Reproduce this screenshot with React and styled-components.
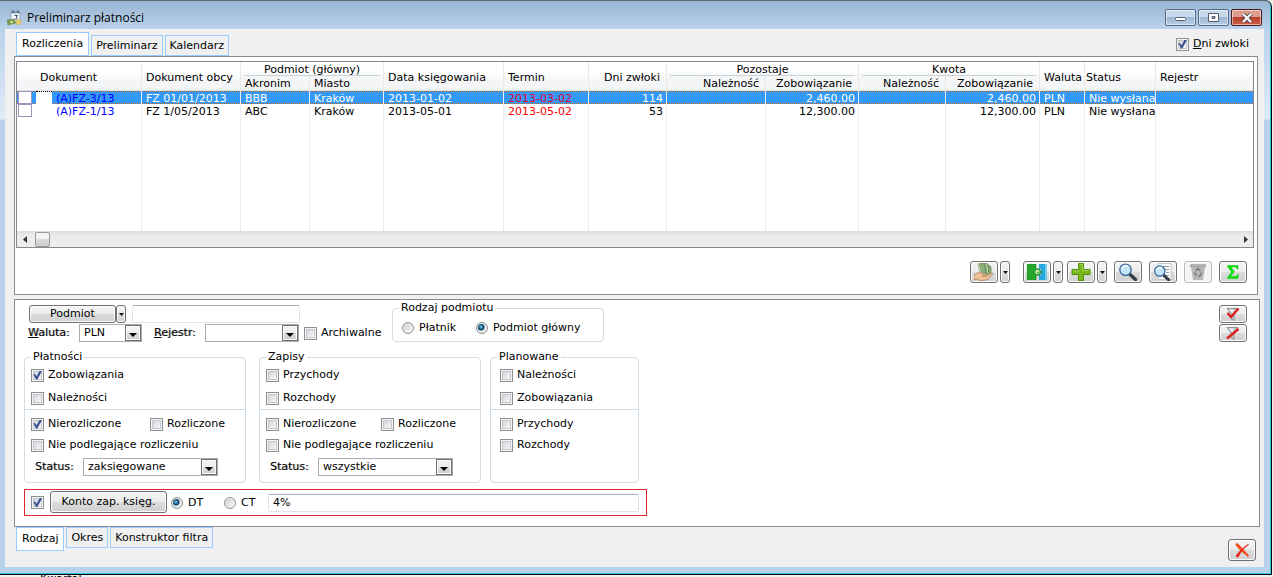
import * as React from "react"
import styled, { createGlobalStyle, css } from "styled-components"

const GlobalStyle = createGlobalStyle`
  *, *::before, *::after {
    box-sizing: border-box;
  }

  body {
    margin: 0;
    background: #f0f0f0;
    color: #000;
    font: 11px/14px "DejaVu Sans", Verdana, sans-serif;
  }

  button, input, select {
    margin: 0;
    font: inherit;
    color: inherit;
  }
`

const Page = styled.div`
  display: flex;
  flex-direction: column;
  min-height: 100vh;
`

const Frame = styled.main`
  flex: 1;
  display: flex;
  flex-direction: column;
  margin-right: 1px;
  padding: 0 7px 7px 5px;
  border: solid #000;
  border-width: 0 1px 1px 0;
  border-top-right-radius: 7px;
  background: linear-gradient(
    #98b4d2 0,
    #b9d1ea 28px,
    #dfebf8 119px,
    #b9d1ea 120px
  );
  box-shadow: inset -1px -1px 0 #35c3de, inset 0 1px 0 #5b6672;
`

const Backdrop = styled.footer`
  display: flex;
  align-items: flex-start;
  height: 2px;
  padding-left: 40px;
  overflow: hidden;
  line-height: 8px;
`

const TitleBar = styled.header`
  display: flex;
  align-items: center;
  gap: 2px;
  height: 29px;
  padding: 6px 2px 0 2px;
`

const Title = styled.h1`
  flex: 1;
  margin: 0 0 0 2px;
  font: 12px/16px "Open Sans", "Noto Sans", sans-serif;
`

const WindowButton = styled.button`
  display: grid;
  place-items: center;
  width: 31px;
  height: 17px;
  padding: 0;
  border: 1px solid ${p => (p.$danger ? "#4c1a20" : "#566b85")};
  border-radius: 2px;
  box-shadow: inset 0 0 0 1px rgba(255, 255, 255, 0.5);
  background: ${p =>
    p.$danger
      ? "linear-gradient(#dc9c8e 0 45%, #b8402c 50%, #c9604a)"
      : "linear-gradient(#c6d8ea 0 45%, #9db7d3 50%, #b8cee4)"};
`

const Client = styled.div`
  flex: 1;
  display: flex;
  flex-direction: column;
  background: #f0f0f0;
`

const TopBar = styled.div`
  display: flex;
  align-items: center;
  justify-content: space-between;
  height: 27px;
  padding: 3px 15px 0 11px;
`

const BottomBar = styled.div`
  flex: 1;
  display: flex;
  justify-content: space-between;
  padding: 0 8px 0 11px;
`

const Tabs = styled.nav`
  display: flex;
  gap: 2px;
  align-items: ${p => (p.$below ? "flex-start" : "flex-end")};
  height: 24px;
`

const Tab = styled.button`
  height: ${p => (p.$active ? 24 : 21)}px;
  padding: 0 ${p => (p.$active ? 5 : 4)}px;
  border: 1px solid #99ccff;
  background: ${p => (p.$active ? "#fff" : "#f0f0f0")};
  white-space: nowrap;
`

const Panel = styled.section`
  margin: 0 ${p => p.$right}px 0 9px;
  border: 1px solid #8a8a94;
  background: #fff;

  & + & {
    margin-top: 4px;
  }
`

const TableBox = styled.div`
  margin: 4px 3px 0 1px;
  border: 1px solid #828790;
  overflow: hidden;
`

const Table = styled.table`
  width: 100%;
  border-collapse: separate;
  border-spacing: 0;
  table-layout: fixed;
  line-height: 13px;
`

const Th = styled.th`
  height: 14px;
  padding: ${p => (p.$tall ? "3px" : "1px")} ${p => (p.$right ? 6 : 0)}px 0
    ${p => p.$indent ?? 4}px;
  border-right: 1px solid #e6e8ea;
  border-bottom: 1px solid #dcdfe1;
  background: ${p =>
    p.$tall
      ? "linear-gradient(#fff 10px, #f5f6f7 18px, #f3f4f6)"
      : "linear-gradient(#f5f6f7, #f3f4f6)"};
  font-weight: normal;
  text-align: ${p => (p.$right ? "right" : "left")};
  white-space: nowrap;

  &:last-child {
    border-right: ${p => (p.$tall ? "0" : "")};
  }
`

const GroupTh = styled.th`
  height: 14px;
  padding: 0 3px;
  border-right: 1px solid #e6e8ea;
  background: linear-gradient(#fff 8px, #f5f6f7);
  font-weight: normal;

  span {
    display: block;
    height: 14px;
    border-bottom: 1px solid #ccd3d8;
    line-height: 15px;
  }
`

const Td = styled.td`
  height: 13px;
  padding: 2px ${p => (p.$right ? 3 : 0)}px 0 4px;
  border-right: 1px solid #ececec;
  color: ${p => p.$color};
  line-height: 11px;
  text-align: ${p => (p.$right ? "right" : "left")};
  white-space: nowrap;
  overflow: hidden;

  &:last-child {
    border-right: 0;
  }
`

const DocTd = styled(Td)`
  padding: 0 0 0 1px;
  line-height: 15px;
`

const Tr = styled.tr`
  ${p =>
    p.$selected &&
    css`
      color: #fff;

      td {
        background:
          repeating-linear-gradient(90deg, #c8691e 0 1px, #3399ff 1px 2px) top /
            100% 1px no-repeat,
          repeating-linear-gradient(90deg, #c8691e 0 1px, #3399ff 1px 2px)
            bottom / 100% 1px no-repeat,
          #3399ff;
      }
    `}
`

const FillRow = styled.tr`
  td {
    height: 114px;
  }
`

const DocCell = styled.span`
  display: flex;
  height: 13px;
`

const RowCheck = styled.input`
  appearance: none;
  flex: none;
  width: 14px;
  height: 13px;
  border: 1px solid #9a94bd;
  background: #fff;
`

const RowMarker = styled.span`
  flex: none;
  width: 16px;
  height: 13px;
  margin: 0 4px 0 4px;
  border-top: ${p => (p.$selected ? "1px dotted #000" : "0")};
  background: #fff;
`

const ScrollBar = styled.div`
  display: flex;
  align-items: center;
  justify-content: space-between;
  height: 16px;
  padding-right: 5px;
  background: linear-gradient(#dcdcdc, #ebebeb 4px, #ededed);
`

const ScrollStart = styled.div`
  display: flex;
  align-items: center;
  gap: 8px;
  padding-left: 6px;
`

const ScrollThumb = styled.div`
  width: 15px;
  height: 15px;
  border: 1px solid #999;
  border-radius: 2px;
  background: linear-gradient(#f4f4f4 0 45%, #d9d9d9 50%, #cfcfcf);
`

const ScrollButton = styled.button`
  display: block;
  padding: 0;
  border: 0;
  background: none;
  line-height: 0;
`

const face = css`
  border: 1px solid #707070;
  border-radius: 3px;
  background: linear-gradient(#f4f4f4 0, #ececec 49%, #dcdcdc 50%, #d0d0d0);
  box-shadow: inset 0 0 0 1px #fbfbfb;
`

const Button = styled.button`
  ${face}
  display: grid;
  place-items: center;
  flex: none;
  width: ${p => p.$width ?? 28}px;
  height: ${p => p.$height ?? 22}px;
  padding: 0;

  &:disabled {
    border-color: #b4b8bb;
    background: #f4f4f4;
  }
`

const Split = styled.div`
  display: flex;
  gap: ${p => p.$gap ?? 2}px;
`

const Toolbar = styled.div`
  display: flex;
  justify-content: flex-end;
  gap: 7px;
  padding: 13px 10px 11px;
`

const AddTools = styled.div`
  display: flex;
  gap: 4px;
  margin-left: 6px;
`

const Filters = styled.div`
  display: flex;
  justify-content: space-between;
  align-items: flex-start;
  padding: 2px 12px 10px 9px;
`

const FilterActions = styled.div`
  display: grid;
  gap: 1px;
  margin-top: 3px;
`

const PartyFields = styled.div`
  display: grid;
  gap: 1px;
  margin: 3px 0 0 4px;
  width: 355px;
`

const FieldRow = styled.div`
  display: flex;
  align-items: center;
  height: 18px;
  padding-left: ${p => p.$indent ?? 0}px;
`

const Caption = styled.label`
  flex: none;
  width: ${p => p.$width}px;
  margin-left: ${p => p.$gap ?? 0}px;
  text-shadow: 1px 0 0 rgba(0, 0, 0, 0.35);
`

const TextInput = styled.input`
  width: ${p => p.$width}px;
  height: 18px;
  margin-left: ${p => p.$gap}px;
  padding: 0 4px;
  border: 1px solid #dfe3ec;
  border-top-color: #abadb3;
  border-radius: 2px;
  background: #fff;
`

const Tick = styled.input.attrs({ type: "checkbox" })`
  appearance: none;
  display: grid;
  place-items: center;
  flex: none;
  width: 13px;
  height: 13px;
  border: 1px solid #8e8f8f;
  background: linear-gradient(135deg, #c9cdd4, #f6f6f6 80%);
  box-shadow: inset 0 0 0 1px #f4f4f4, inset 0 0 0 2px #c4c8ce;

  &:checked::before {
    content: "";
    width: 9px;
    height: 9px;
    background: #3a5290;
    clip-path: polygon(5% 45%, 22% 38%, 40% 65%, 75% 0, 100% 5%, 48% 100%, 34% 100%);
  }
`

const Radio = styled.input.attrs({ type: "radio" })`
  appearance: none;
  flex: none;
  width: 12px;
  height: 12px;
  border: 1px solid #8e8f8f;
  border-radius: 50%;
  background: linear-gradient(135deg, #c5c9cf, #f4f4f4 80%);
  box-shadow: inset 0 0 0 1px #f0f0f0;

  &:checked {
    background: radial-gradient(circle at 40% 40%, #7ed0ec 0, #1b6a93 2px, #123a58 3px, #e6e6e6 4px);
  }
`

const Choice = styled.label`
  display: flex;
  align-items: center;
  gap: ${p => p.$gap ?? 4}px;
  height: 16px;
  width: ${p => (p.$width ? `${p.$width}px` : "auto")};
  white-space: nowrap;
`

const Archive = styled.div`
  margin-left: 5px;
`

const SelectBox = styled.span`
  display: grid;
  flex: none;
  width: ${p => p.$width}px;
  height: 18px;
  border: 1px solid #abadb3;
  background: #fff;

  select,
  span {
    grid-area: 1 / 1;
  }

  select {
    appearance: none;
    padding: 0 20px 0 4px;
    border: 0;
    background: none;
  }
`

const SelectArrow = styled.span`
  ${face}
  display: grid;
  place-items: center;
  justify-self: end;
  width: 16px;
  border-radius: 0;
  pointer-events: none;

  &::before {
    content: "";
    margin-top: 4px;
    border: solid transparent;
    border-width: 4px 4px 0;
    border-top-color: #000;
  }
`

const Group = styled.fieldset`
  min-width: 0;
  margin: 0 0 0 ${p => p.$before ?? 0}px;
  padding: 0;
  width: ${p => p.$width}px;
  border: 1px solid #d0dce6;
  border-radius: 4px;
`

const Legend = styled.legend`
  margin-left: 6px;
  padding: 0 2px;
  line-height: 12px;
`

const Groups = styled.div`
  display: flex;
  gap: 9px;
  margin-top: 9px;
`

const Kinds = styled.div`
  display: grid;
  gap: 7px;
  padding: 4px ${p => p.$indent ?? 6}px 3px;
`

const States = styled.div`
  display: grid;
  align-content: start;
  gap: 5px;
  height: 73px;
  padding: 6px ${p => p.$indent ?? 6}px;
  border-top: 1px solid #d0dce6;
`

const PartyKinds = styled.div`
  display: flex;
  padding: 6px 9px 5px;
`

const AccountRow = styled.div`
  display: flex;
  align-items: center;
  width: 623px;
  height: 27px;
  margin-top: 6px;
  padding: 0 7px 0 6px;
  border: 1px solid #e0242c;

  ${Button} {
    margin: 0 4px 2px 6px;
  }
`

const CloseButton = styled(Button)`
  margin-top: 12px;
`

const Caret = () => (
  <svg width="5" height="3" viewBox="0 0 5 3" aria-hidden="true">
    <path d="M0 0h5L2.500 3z" fill="#111" />
  </svg>
)

const ScrollArrow = ({ right }) => (
  <svg width="4" height="7" viewBox="0 0 4 7" aria-hidden="true">
    <path d={right ? "M0 0v7l4-3.500z" : "M4 0v7L0 3.500z"} fill="#333" />
  </svg>
)

const AppIcon = () => (
  <svg width="16" height="16" viewBox="0 0 16 16" aria-hidden="true">
    <rect x="4" y="1.500" width="9" height="10" rx="1" fill="#f8fbff" stroke="#8fa6bc" />
    <path d="M4 1h9v2.500H4z" fill="#7899b8" />
    <path d="M6 0v3M11 0v3" stroke="#3f5870" />
    <path d="M7.500 5.500h3L9 7c2 0 2 2.500-1.500 2" fill="none" stroke="#33485e" />
    <path d="M0 10l7-1 2 4-8 2z" fill="#769c46" stroke="#66853f" strokeWidth=".5" />
    <ellipse cx="4.500" cy="12" rx="1.500" ry="1.200" fill="#c9dca2" />
    <circle cx="11.500" cy="12" r="2.600" fill="#e3cf7d" stroke="#c2a549" strokeWidth=".6" />
  </svg>
)

const MinimizeIcon = () => (
  <svg width="12" height="9" viewBox="0 0 12 9" aria-hidden="true">
    <rect x=".5" y="4.500" width="10" height="3" rx="1" fill="#fff" stroke="#535e6c" />
  </svg>
)

const MaximizeIcon = () => (
  <svg width="12" height="9" viewBox="0 0 12 9" aria-hidden="true">
    <path d="M.5.5h10v8H.5zM4 3.500v2h3v-2z" fill="#fff" fillRule="evenodd" stroke="#535e6c" />
  </svg>
)

const CrossIcon = () => (
  <svg width="12" height="10" viewBox="0 0 12 10" aria-hidden="true">
    <path d="M2 1l8 8M10 1L2 9" stroke="#50404b" strokeWidth="4" />
    <path d="M2 1l8 8M10 1L2 9" stroke="#fff" strokeWidth="2.400" />
  </svg>
)

const PayIcon = () => (
  <svg width="20" height="18" viewBox="0 0 20 18" aria-hidden="true">
    <path d="M4 1l8-1 5 4v7l-8 1-3-3z" fill="#8cae78" stroke="#587b47" strokeWidth=".7" />
    <path d="M4 1c2 2 1 6 3 9M12 1c2 3 1 6 2 10" fill="none" stroke="#c5d8b4" />
    <path d="M10 1c2 3 1 6 2 10M14 2c1 3 0 6 1 9" fill="none" stroke="#55783f" strokeWidth=".7" />
    <path
      d="M0 12l4-2c2-1 3 0 5 1l3 0c1 0 1 2-1 2H8c3 1 5 0 9-3 2-.5 2 1 1 2l-5 5-7 .5-3-1.500-3 1z"
      fill="#efc29b"
      stroke="#b47e5b"
      strokeWidth=".8"
    />
  </svg>
)

const PuzzleIcon = () => (
  <svg width="20" height="16" viewBox="0 0 20 16" aria-hidden="true">
    <path d="M12 0h8v16h-8v-5h2V5h-2z" fill="#29a7dd" />
    <path d="M18 0h2v16h-2z" fill="#77cced" />
    <path d="M0 0h9v5c2-1 5 0 5 3s-3 4-5 3v5H0z" fill="#27a52d" stroke="#108020" strokeWidth=".6" />
    <circle cx="10.500" cy="8" r="2.200" fill="#d5f0bc" />
    <circle cx="11" cy="8.500" r="1" fill="#3c9a45" />
  </svg>
)

const PlusIcon = () => (
  <svg width="20" height="18" viewBox="0 0 20 18" aria-hidden="true">
    <path
      d="M7.500.5h5v6h6.500v5h-6.500v6h-5v-6H1v-5h6.500z"
      fill="#76b51c"
      stroke="#4f9308"
    />
    <path d="M8.500 1.500h3v6h6.500M2 8h6" fill="none" stroke="#a5d553" />
  </svg>
)

const Lens = ({ page }) => (
  <svg width="20" height="18" viewBox="0 0 20 18" aria-hidden="true">
    {page && (
      <>
        <path d="M5 .5h13v16H5z" fill="#f8f9fa" stroke="#c3c8cc" />
        <path d="M9 3.500h7M12 6.500h4M13 9.500h3M13 12.500h3" stroke="#959ca2" />
      </>
    )}
    <g transform={page ? "translate(0 2) scale(.9)" : undefined}>
      <path d="M11.500 11l6 5.500" stroke="#353e47" strokeWidth="3.400" strokeLinecap="round" />
      <circle cx="7.500" cy="6.800" r="5.700" fill="#c4e4f8" stroke="#3e6c9e" strokeWidth="1.400" />
      <path d="M4 6c1-3 4-4 6-2.500" fill="none" stroke="#f6fcff" strokeWidth="1.600" />
    </g>
  </svg>
)

const BinIcon = () => (
  <svg width="18" height="18" viewBox="0 0 18 18" aria-hidden="true">
    <path d="M2 4h14l-2 13H4z" fill="#b7b8ba" />
    <path d="M1 1h16v3H1z" fill="#9fa2a4" />
    <path d="M1 2h16" stroke="#c9cbcc" />
    <path d="M6.500 8L9 5.500 11.500 8M12.500 9.500L11 13H9.500M7.500 13L5.500 9.500" fill="none" stroke="#77797b" strokeWidth="1.500" />
  </svg>
)

const SigmaIcon = () => (
  <svg width="12" height="14" viewBox="0 0 12 14" aria-hidden="true">
    <path
      d="M.5.5h10.500V4h-1C9.500 2.500 9 2 7.500 2H4l3.500 4.700L3.500 11.500H8c1.500 0 2-.7 2.500-2h1l-.7 4H.5v-1L4.500 7 .5 1.500z"
      fill="#0be40b"
      stroke="#09cc09"
      strokeWidth=".5"
    />
  </svg>
)

const FunnelIcon = ({ off }) => (
  <svg width="14" height="15" viewBox="0 0 14 15" aria-hidden="true">
    <path d="M1 1.500h11L8 7v6.500l-3-2V7z" fill="#c2c5c8" stroke="#8f9396" />
    <path d="M3 2.500h5L6.500 6z" fill="#f5f5f5" />
    <path
      d={off ? "M1 12.500L12.500 3" : "M1.500 6l3.500 4L12.500 1.500"}
      fill="none"
      stroke="#dc2019"
      strokeWidth="2.400"
    />
  </svg>
)

const CancelIcon = () => (
  <svg width="15" height="15" viewBox="0 0 15 15" aria-hidden="true">
    <path d="M1 .5C1 0 3 0 4 1.500L14 12.500l-1 1.500C8 9.500 4 7 .5 2z" fill="#f2511e" />
    <path d="M14 1.500C9 5 6 8.500 4 13.500c-1 1-3 1-3 .5 0-2 0-2 1-3 3.500-4 7-7.500 11-10z" fill="#e5281c" />
  </svg>
)

const columns = [125, 99, 69, 74, 120, 85, 78, 99, 93, 87, 94, 45, 71]

const rows = [
  ["(A)FZ-3/13", "FZ 01/01/2013", "BBB", "2013-01-02", "2013-03-02", "114", "2,460.00"],
  ["(A)FZ-1/13", "FZ 1/05/2013", "ABC", "2013-05-01", "2013-05-02", "53", "12,300.00"],
]

const SettlementRow = ({ row, selected }) => {
  const [doc, foreign, acronym, booked, due, days, amount] = row
  return (
    <Tr $selected={selected}>
      <DocTd $color="#0000ff">
        <DocCell>
          <RowCheck type="checkbox" aria-label={doc} />
          <RowMarker $selected={selected} />
          {doc}
        </DocCell>
      </DocTd>
      <Td>{foreign}</Td>
      <Td>{acronym}</Td>
      <Td>Kraków</Td>
      <Td>{booked}</Td>
      <Td $color={selected ? "#e00030" : "#ff0000"}>{due}</Td>
      <Td $right>{days}</Td>
      <Td />
      <Td $right>{amount}</Td>
      <Td />
      <Td $right>{amount}</Td>
      <Td>PLN</Td>
      <Td>Nie wysłana</Td>
      <Td />
    </Tr>
  )
}

const Settlements = () => (
  <TableBox>
    <Table>
      <colgroup>
        {columns.map((width, i) => (
          <col key={i} width={width} />
        ))}
        <col />
      </colgroup>
      <thead>
        <tr>
          <Th $tall rowSpan={2} $indent={23}>Dokument</Th>
          <Th $tall rowSpan={2}>Dokument obcy</Th>
          <GroupTh colSpan={2}><span>Podmiot (główny)</span></GroupTh>
          <Th $tall rowSpan={2}>Data księgowania</Th>
          <Th $tall rowSpan={2}>Termin</Th>
          <Th $tall rowSpan={2} $right>Dni zwłoki</Th>
          <GroupTh colSpan={2}><span>Pozostaje</span></GroupTh>
          <GroupTh colSpan={2}><span>Kwota</span></GroupTh>
          <Th $tall rowSpan={2}>Waluta</Th>
          <Th $tall rowSpan={2} $indent={1}>Status</Th>
          <Th $tall rowSpan={2}>Rejestr</Th>
        </tr>
        <tr>
          <Th>Akronim</Th>
          <Th>Miasto</Th>
          <Th $right>Należność</Th>
          <Th $right>Zobowiązanie</Th>
          <Th $right>Należność</Th>
          <Th $right>Zobowiązanie</Th>
        </tr>
      </thead>
      <tbody>
        {rows.map((row, i) => (
          <SettlementRow key={row[0]} row={row} selected={i === 0} />
        ))}
        <FillRow>
          {[...columns, 0].map((_, i) => (
            <Td key={i} />
          ))}
        </FillRow>
      </tbody>
    </Table>
    <ScrollBar>
      <ScrollStart>
        <ScrollButton aria-label="W lewo"><ScrollArrow /></ScrollButton>
        <ScrollThumb />
      </ScrollStart>
      <ScrollButton aria-label="W prawo"><ScrollArrow right /></ScrollButton>
    </ScrollBar>
  </TableBox>
)

const SplitButton = ({ label, children }) => (
  <Split>
    <Button aria-label={label}>{children}</Button>
    <Button $width={10} aria-label={`${label} - więcej`}><Caret /></Button>
  </Split>
)

const Check = ({ label, checked, width }) => (
  <Choice $width={width}>
    <Tick defaultChecked={checked} />
    {label}
  </Choice>
)

const Option = ({ label, name, checked, width }) => (
  <Choice $width={width} $gap={5}>
    <Radio name={name} defaultChecked={checked} />
    {label}
  </Choice>
)

const Select = ({ id, width, value }) => (
  <SelectBox $width={width}>
    <select id={id} defaultValue={value}>
      <option>{value}</option>
    </select>
    <SelectArrow />
  </SelectBox>
)

const StateChecks = ({ id, status, checked, width }) => (
  <States>
    <Split $gap={0}>
      <Check label="Nierozliczone" checked={checked} width={width} />
      <Check label="Rozliczone" />
    </Split>
    <Check label="Nie podlegające rozliczeniu" />
    <FieldRow $indent={4}>
      <Caption htmlFor={id} $width={48}>Status:</Caption>
      <Select id={id} width={135} value={status} />
    </FieldRow>
  </States>
)

const App = () => (
  <Page>
    <GlobalStyle />
    <Frame>
      <TitleBar>
        <AppIcon />
        <Title>Preliminarz płatności</Title>
        <WindowButton aria-label="Minimalizuj"><MinimizeIcon /></WindowButton>
        <WindowButton aria-label="Maksymalizuj"><MaximizeIcon /></WindowButton>
        <WindowButton $danger aria-label="Zamknij"><CrossIcon /></WindowButton>
      </TitleBar>
      <Client>
        <TopBar>
          <Tabs>
            <Tab $active>Rozliczenia</Tab>
            <Tab>Preliminarz</Tab>
            <Tab>Kalendarz</Tab>
          </Tabs>
          <Check label={<span><u>D</u>ni zwłoki</span>} checked />
        </TopBar>
        <Panel $right={6}>
          <Settlements />
          <Toolbar>
            <SplitButton label="Rozlicz"><PayIcon /></SplitButton>
            <AddTools>
              <SplitButton label="Kompensata"><PuzzleIcon /></SplitButton>
              <SplitButton label="Dodaj"><PlusIcon /></SplitButton>
            </AddTools>
            <Button aria-label="Podgląd"><Lens /></Button>
            <Button aria-label="Podgląd dokumentu"><Lens page /></Button>
            <Button disabled aria-label="Usuń"><BinIcon /></Button>
            <Button aria-label="Suma"><SigmaIcon /></Button>
          </Toolbar>
        </Panel>
        <Panel $right={4}>
          <Filters>
            <div>
              <Split $gap={9}>
                <PartyFields>
                  <FieldRow $indent={1}>
                    <Button $width={87} $height={18}>Podmiot</Button>
                    <Button $width={10} $height={18} aria-label="Rodzaj"><Caret /></Button>
                    <TextInput $width={168} $gap={6} aria-label="Podmiot" />
                  </FieldRow>
                  <FieldRow>
                    <Caption htmlFor="currency" $width={51}><u>W</u>aluta:</Caption>
                    <Select id="currency" width={63} value="PLN" />
                    <Caption htmlFor="register" $width={51} $gap={12}><u>R</u>ejestr:</Caption>
                    <Select id="register" width={94} value="" />
                    <Archive>
                      <Check label="Archiwalne" />
                    </Archive>
                  </FieldRow>
                </PartyFields>
                <Group $width={212}>
                  <Legend>Rodzaj podmiotu</Legend>
                  <PartyKinds>
                    <Option name="party" label="Płatnik" width={74} />
                    <Option name="party" label="Podmiot główny" checked />
                  </PartyKinds>
                </Group>
              </Split>
              <Groups>
                <Group $width={222}>
                  <Legend>Płatności</Legend>
                  <Kinds>
                    <Check label="Zobowiązania" checked />
                    <Check label="Należności" />
                  </Kinds>
                  <StateChecks id="payment-status" status="zaksięgowane" width={119} checked />
                </Group>
                <Group $width={222} $before={4}>
                  <Legend>Zapisy</Legend>
                  <Kinds>
                    <Check label="Przychody" />
                    <Check label="Rozchody" />
                  </Kinds>
                  <StateChecks id="entry-status" status="wszystkie" width={115} />
                </Group>
                <Group $width={149}>
                  <Legend>Planowane</Legend>
                  <Kinds $indent={9}>
                    <Check label="Należności" />
                    <Check label="Zobowiązania" />
                  </Kinds>
                  <States $indent={9}>
                    <Check label="Przychody" />
                    <Check label="Rozchody" />
                  </States>
                </Group>
              </Groups>
              <AccountRow>
                <Tick defaultChecked aria-label="Konto" />
                <Button $width={117}>Konto zap. księg.</Button>
                <Option name="side" label="DT" width={53} checked />
                <Option name="side" label="CT" width={44} />
                <TextInput $width={371} $gap={0} defaultValue="4%" aria-label="Konto" />
              </AccountRow>
            </div>
            <FilterActions>
              <Button $height={18} aria-label="Zastosuj filtr"><FunnelIcon /></Button>
              <Button $height={18} aria-label="Wyczyść filtr"><FunnelIcon off /></Button>
            </FilterActions>
          </Filters>
        </Panel>
        <BottomBar>
          <Tabs $below>
            <Tab $active>Rodzaj</Tab>
            <Tab>Okres</Tab>
            <Tab>Konstruktor filtra</Tab>
          </Tabs>
          <CloseButton aria-label="Zamknij okno"><CancelIcon /></CloseButton>
        </BottomBar>
      </Client>
    </Frame>
    <Backdrop>Kwartał</Backdrop>
  </Page>
)

export default App
